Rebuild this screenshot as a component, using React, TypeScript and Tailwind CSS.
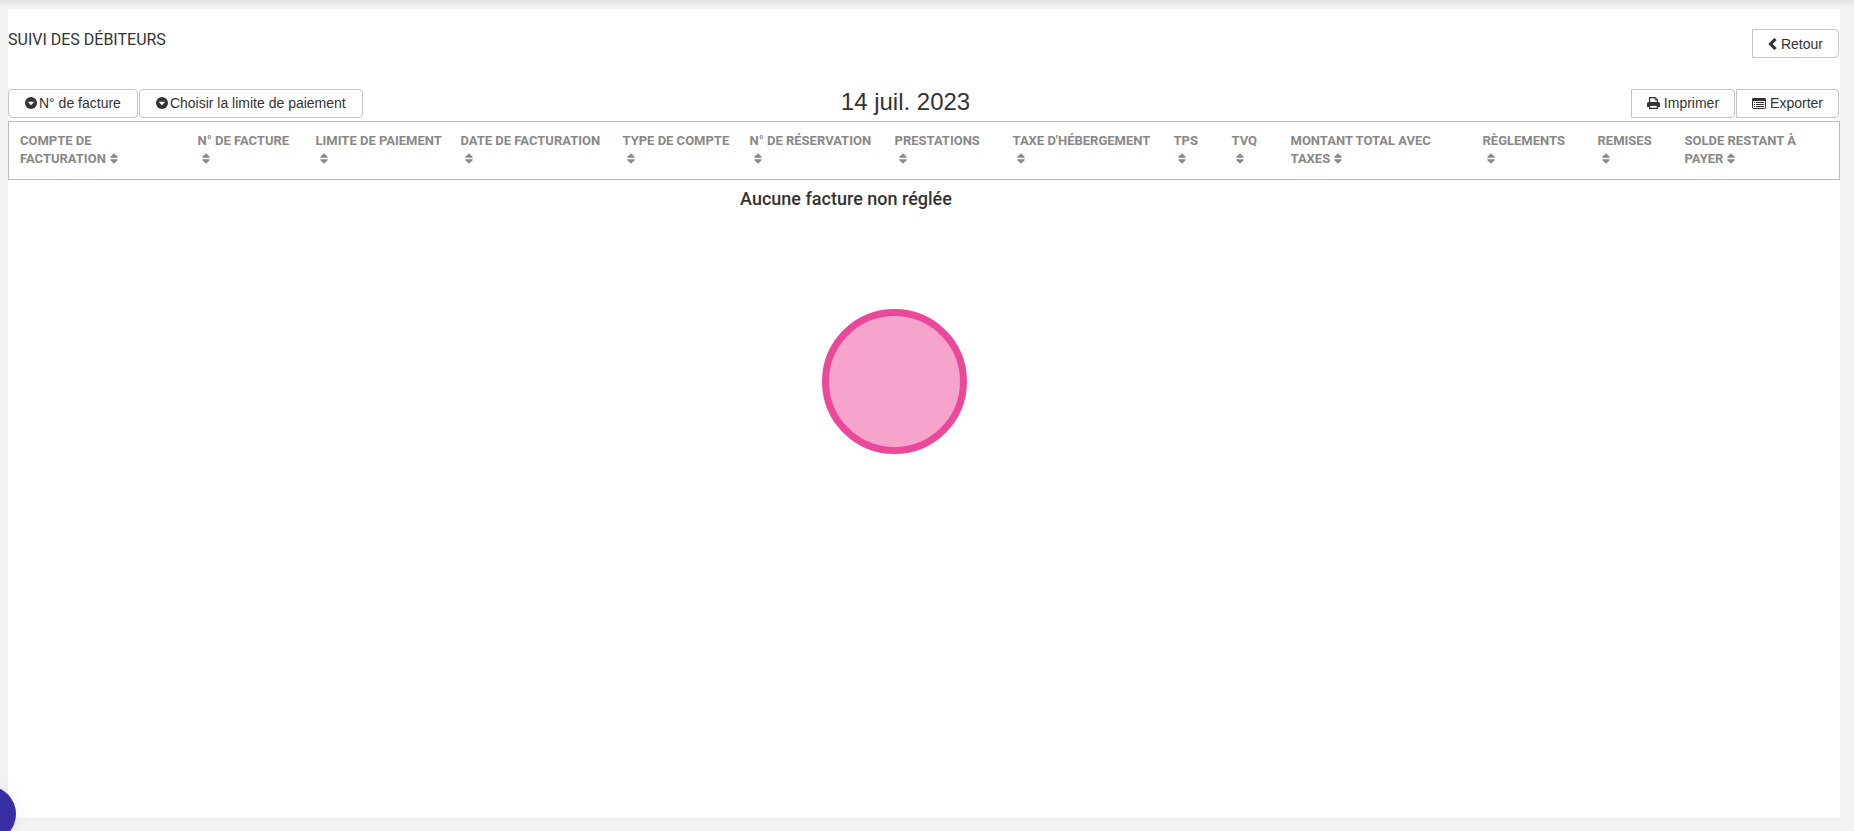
import React from 'react';

interface Column {
  label: string;
  width: string;
}

const COLUMNS: Column[] = [
  { label: 'Compte de facturation', width: 'w-[178px]' },
  { label: 'N° de facture', width: 'w-[118px]' },
  { label: 'Limite de paiement', width: 'w-[145px]' },
  { label: 'Date de facturation', width: 'w-[162px]' },
  { label: 'Type de compte', width: 'w-[127px]' },
  { label: 'N° de réservation', width: 'w-[145px]' },
  { label: 'Prestations', width: 'w-[118px]' },
  { label: "Taxe d'hébergement", width: 'w-[161px]' },
  { label: 'TPS', width: 'w-[58px]' },
  { label: 'TVQ', width: 'w-[59px]' },
  { label: 'Montant total avec taxes', width: 'w-[192px]' },
  { label: 'Règlements', width: 'w-[115px]' },
  { label: 'Remises', width: 'w-[87px]' },
  { label: 'Solde restant à payer', width: 'w-[166px]' },
];

const SortIcon: React.FC = () => (
  <svg className="mr-2.5 ml-1 inline-block h-[11px] w-2 align-[-1px]" viewBox="0 0 8 11" fill="currentColor" aria-hidden="true">
    <path d="M4 0.2 L7.8 4 Q8 4.8 7.2 4.8 H0.8 Q0 4.8 0.2 4 Z" />
    <path d="M4 10.8 L7.8 7 Q8 6.2 7.2 6.2 H0.8 Q0 6.2 0.2 7 Z" />
  </svg>
);

const CaretCircleIcon: React.FC = () => (
  <svg className="size-3" viewBox="0 0 12 12" aria-hidden="true">
    <circle cx="6" cy="6" r="6" fill="currentColor" />
    <path d="M2.6 4.8 H9.4 L6 8.2 Z" fill="#fff" />
  </svg>
);

const ChevronLeftIcon: React.FC = () => (
  <svg className="h-3 w-[9px]" viewBox="0 0 9 12" fill="none" stroke="currentColor" strokeWidth="3.2" aria-hidden="true">
    <path d="M7.5 1 L2.6 6 L7.5 11" />
  </svg>
);

const PrintIcon: React.FC = () => (
  <svg className="h-3 w-[13px]" viewBox="0 0 13 12" fill="none" stroke="currentColor" strokeWidth="1.2" aria-hidden="true">
    <path d="M2.6 6 V0.6 H8.3 L10.4 2.7 V6" />
    <path d="M8 0.6 V3 H10.4" strokeWidth="0.8" />
    <path d="M1.6 5 H11.4 Q13 5 13 6.6 V10 H10.4 V8.4 H2.6 V10 H0 V6.6 Q0 5 1.6 5 Z" fill="currentColor" stroke="none" />
    <path d="M2.6 8.2 H10.4 V11.4 H2.6 Z" />
  </svg>
);

const ListIcon: React.FC = () => (
  <svg className="h-[11px] w-[14px]" viewBox="0 0 14 11" fill="none" stroke="currentColor" aria-hidden="true">
    <rect x="0.5" y="0.5" width="13" height="10" rx="0.8" />
    <path d="M0.5 1.5 H13.5" strokeWidth="3" />
    <path d="M2 4.5 H3 M4 4.5 H12 M2 6.5 H3 M4 6.5 H12 M2 8.5 H3 M4 8.5 H12" />
  </svg>
);

interface ToolButtonProps {
  className: string;
  children: React.ReactNode;
}

const ToolButton: React.FC<ToolButtonProps> = ({ className, children }) => (
  <button
    type="button"
    className={`flex h-[29px] items-center border border-[#c4c4c4] bg-white text-sm whitespace-nowrap text-[#333] ${className}`}
  >
    {children}
  </button>
);

const App: React.FC = () => {
  return (
    <div className="relative flex min-h-screen flex-col overflow-hidden bg-[#f2f2f2] pr-3.5 pb-[13px] pl-2 font-['Liberation_Sans',Arial,sans-serif] text-[#333]">
      <div className="-mr-3.5 -ml-2 h-[9px] bg-linear-to-b from-[#e4e4e4] to-[#f2f2f2] to-70%" />
      <main className="grow bg-white">
        <header className="flex items-start justify-between pt-5 pr-px">
          <h1 className="font-[Roboto,sans-serif] text-base leading-[22px] uppercase">Suivi des débiteurs</h1>
          <ToolButton className="gap-1 rounded-r px-[15px]">
            <ChevronLeftIcon />
            Retour
          </ToolButton>
        </header>

        <div className="mt-[31px] grid grid-cols-[1fr_auto_1fr] items-start pr-px">
          <div className="flex gap-px">
            <ToolButton className="rounded px-4 pb-px">
              <CaretCircleIcon />
              <span className="pl-0.5">N° de facture</span>
            </ToolButton>
            <ToolButton className="rounded px-4 pb-px">
              <CaretCircleIcon />
              <span className="pl-0.5">Choisir la limite de paiement</span>
            </ToolButton>
          </div>
          <h2 className="mr-9 text-2xl leading-[26px]">14 juil. 2023</h2>
          <div className="flex justify-end gap-px">
            <ToolButton className="gap-1 rounded-r px-[15px] pb-px">
              <PrintIcon />
              Imprimer
            </ToolButton>
            <ToolButton className="gap-1 rounded-r px-[15px] pb-px">
              <ListIcon />
              Exporter
            </ToolButton>
          </div>
        </div>

        <table className="mt-[3px] w-full table-fixed border border-[#bbb] font-[Roboto,sans-serif] text-[#888]">
          <thead>
            <tr className="h-[58px]">
              {COLUMNS.map((col) => (
                <th
                  key={col.label}
                  scope="col"
                  className={`${col.width} pt-2.5 pr-1 pl-[11px] text-left align-top text-[13px] leading-[18px] font-bold uppercase first:pr-4`}
                >
                  {col.label}
                  <SortIcon />
                </th>
              ))}
            </tr>
          </thead>
        </table>

        <p className="mt-[7px] pr-[156px] text-center font-[Roboto,sans-serif] text-lg leading-6 font-medium">
          Aucune facture non réglée
        </p>
      </main>

      {/* pointer marker floating over the page */}
      <div className="absolute top-[309px] left-[822px] size-[145px] rounded-full border-[7px] border-[#ec4899] bg-[#f6a4cc]" />

      {/* help launcher, mostly off the left edge */}
      <button
        type="button"
        aria-label="Aide"
        className="absolute -bottom-[11px] -left-10 size-14 rounded-full bg-[#392ea3] shadow-[0_1px_20px_rgba(0,0,0,0.06)]"
      />
    </div>
  );
};

export default App;
